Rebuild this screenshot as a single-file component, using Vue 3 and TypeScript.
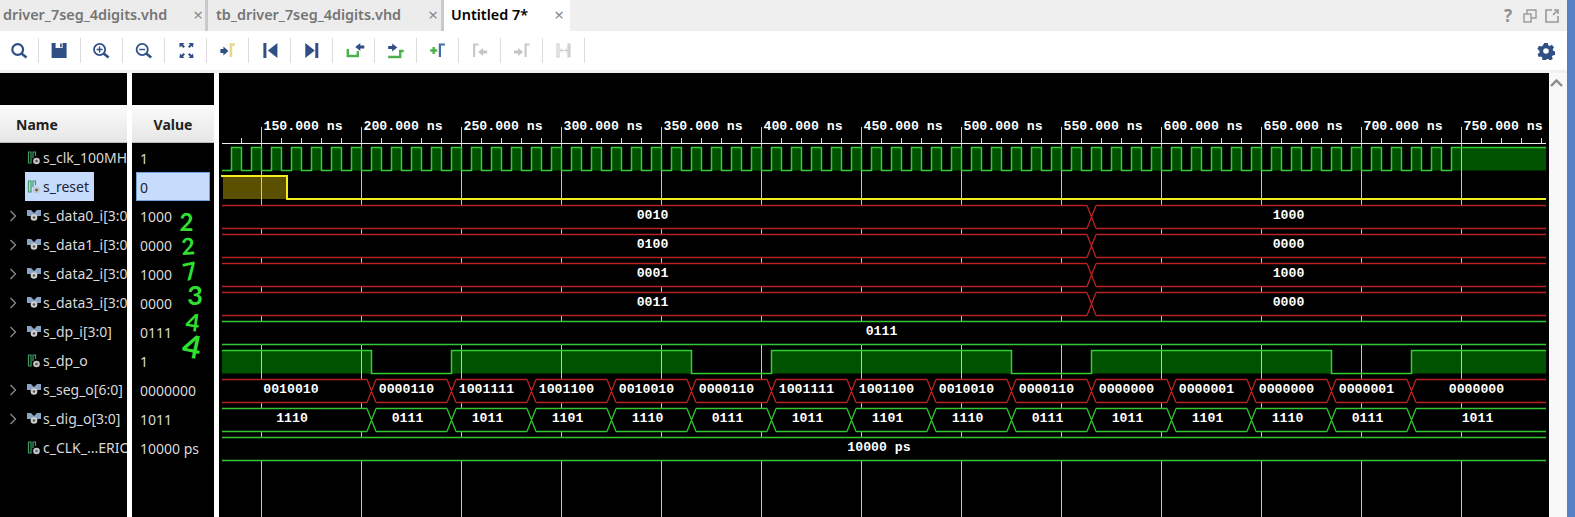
<template>
  <div class="page">
    <div class="main">
      <div class="tabbar">
        <div class="tab tab-a"><span>driver_7seg_4digits.vhd</span><i class="close">×</i></div>
        <div class="tab tab-b"><span>tb_driver_7seg_4digits.vhd</span><i class="close">×</i></div>
        <div class="tab tab-c"><span>Untitled 7*</span><i class="close">×</i></div>
        <div class="win-icons">
          <b class="help">?</b>
          <svg width="14" height="14" viewBox="0 0 14 14" fill="none" stroke="#9a9a9a" stroke-width="1.4">
            <rect x="1" y="5" width="7" height="8" />
            <path d="M4 5V1h9v8H8" />
          </svg>
          <svg width="14" height="14" viewBox="0 0 14 14" fill="none" stroke="#9a9a9a" stroke-width="1.6">
            <path d="M7 1H1v12h12V7" />
            <path d="M8 6l5-5M9 1h4v4" />
          </svg>
        </div>
      </div>

      <div class="toolbar">
        <button class="tool first">
          <svg width="24" height="24" viewBox="5 39 24 24" fill="none" stroke="#2f4f85" stroke-width="2.2">
            <circle cx="15.7" cy="49.5" r="5.4" />
            <path d="M19.5 53.5l5 4" stroke-width="2.6" />
          </svg>
        </button>
        <button class="tool">
          <svg width="24" height="24" viewBox="47.4 39 24 24">
            <path d="M52 43h15v15H52z" fill="#2f4f85" />
            <path d="M56 43h7v5h-7z" fill="#fff" />
            <path d="M60.5 43.6h1.6v3.6h-1.6z" fill="#2f4f85" />
          </svg>
        </button>
        <button class="tool">
          <svg width="24" height="24" viewBox="89.4 39 24 24" fill="none" stroke="#2f4f85" stroke-width="1.8">
            <circle cx="100" cy="49.5" r="5.6" />
            <path d="M97 49.5h6M100 46.5v6" stroke-width="1.4" />
            <path d="M104 53.5l5 4" stroke-width="2.6" />
          </svg>
        </button>
        <button class="tool">
          <svg width="24" height="24" viewBox="131.5 39 24 24" fill="none" stroke="#2f4f85" stroke-width="1.8">
            <circle cx="142.7" cy="49.5" r="5.6" />
            <path d="M139.7 49.5h6" stroke-width="1.4" />
            <path d="M146.7 53.5l5 4" stroke-width="2.6" />
          </svg>
        </button>
        <button class="tool">
          <svg width="24" height="24" viewBox="173.5 39 24 24" fill="#2f4f85">
            <path d="M180 43h5l-1.5 1.5 2 2-1.5 1.5-2-2L180 47.5z" />
            <path d="M194 43h-5l1.5 1.5-2 2 1.5 1.5 2-2 1.5 1.5z" />
            <path d="M180 58h5l-1.5-1.5 2-2-1.5-1.5-2 2-1.5-1.5z" />
            <path d="M194 58h-5l1.5-1.5-2-2 1.5-1.5 2 2 1.5-1.5z" />
          </svg>
        </button>
        <button class="tool">
          <svg width="24" height="24" viewBox="215.6 39 24 24">
            <path d="M220 49h3v-2.5l5 4.5-5 4.5V53h-3z" fill="#2f4f85" />
            <path d="M230.5 57V44.5h4" fill="none" stroke="#e6d88e" stroke-width="2.6" />
          </svg>
        </button>
        <button class="tool">
          <svg width="24" height="24" viewBox="257.6 39 24 24" fill="#2f4f85">
            <path d="M263 43h3v15h-3zM277 43v15l-9.5-7.5z" />
          </svg>
        </button>
        <button class="tool">
          <svg width="24" height="24" viewBox="299.7 39 24 24" fill="#2f4f85">
            <path d="M315 43h3v15h-3zM305 43v15l9.5-7.5z" />
          </svg>
        </button>
        <button class="tool">
          <svg width="24" height="24" viewBox="341.7 39 24 24">
            <path d="M347.5 49v7h10v-5" fill="none" stroke="#4cb04c" stroke-width="2.4" />
            <path d="M364 45.5h-4v-2.5l-5 4 5 4v-2.5h4z" fill="#2f4f85" />
          </svg>
        </button>
        <button class="tool">
          <svg width="24" height="24" viewBox="383.8 39 24 24">
            <path d="M388 57h12v-6h3.5" fill="none" stroke="#4cb04c" stroke-width="2.4" />
            <path d="M388 46h4v-2.5l5 4-5 4V49h-4z" fill="#2f4f85" />
          </svg>
        </button>
        <button class="tool">
          <svg width="24" height="24" viewBox="425.8 39 24 24" fill="none">
            <path d="M430 50.5h7M433.5 47v7" stroke="#4cb04c" stroke-width="2.4" />
            <path d="M439.7 57V44.5h5" stroke="#3f6f9f" stroke-width="2.2" />
          </svg>
        </button>
        <button class="tool">
          <svg width="24" height="24" viewBox="467.9 39 24 24" fill="none">
            <path d="M474 57V44.5h4.5" stroke="#c9c9c9" stroke-width="2.2" />
            <path d="M487 50.5h-4v-2.5l-5 4 5 4v-2.5h4z" fill="#c4c4c4" />
          </svg>
        </button>
        <button class="tool">
          <svg width="24" height="24" viewBox="509.9 39 24 24" fill="none">
            <path d="M514 50.5h4v-2.5l5 4-5 4v-2.5h-4z" fill="#c4c4c4" />
            <path d="M525.5 57V44.5h4" stroke="#c9c9c9" stroke-width="2.2" />
          </svg>
        </button>
        <button class="tool">
          <svg width="24" height="24" viewBox="552 39 24 24" fill="none" stroke="#cdcdcd">
            <path d="M557 44h2v13h-2z" stroke-width="1.2" />
            <path d="M568 44h2v13h-2z" fill="#d8d8d8" stroke-width="1.2" />
            <path d="M560 50.5h7.5M562 48.5l-2 2 2 2M565.5 48.5l2 2-2 2" />
          </svg>
        </button>
        <svg class="gear" width="18" height="18" viewBox="0 0 18 18">
          <path
            fill="#2f4f85"
            fill-rule="evenodd"
            d="M7.2 1h3.6l.5 2.3 1.5.7 2-1.2 2.3 2.6-1.4 1.9.4 1.5 2.1.9-.2 3.3-2.3.4-.8 1.4.9 2.1-2.9 1.7-1.6-1.7-1.6.1-1.2 1.9-3.2-1-.1-2.3-1.2-1-2.3.4-1.1-3.1 1.9-1.2v-1.6L.4 6.7l1.7-3 2.2.8L5.7 3.7z M9 6.2a2.8 2.8 0 1 0 0 5.6 2.8 2.8 0 0 0 0-5.6z"
          />
        </svg>
      </div>

      <div class="body">
        <div class="col names">
          <div class="head">Name</div>
          <div v-for="s in signals" :key="s.name" class="row">
            <svg v-if="s.bus" class="chev" width="8" height="12" viewBox="0 0 8 12" fill="none" stroke="#8a8a8a" stroke-width="1.3">
              <path d="M1.5 1l5 5-5 5" />
            </svg>
            <div class="name-box" :class="{ sel: s.sel }">
              <svg class="sig" width="14" height="14" viewBox="0 0 14 14">
                <template v-if="s.bus">
                  <path d="M0 1h4l3 3 3-3h4v6h-3.5L7 10 3.5 7H0z" fill="#8aa3c2" />
                  <circle cx="7" cy="8.5" r="3.3" fill="#cfcfcf" />
                  <circle cx="7" cy="8.5" r="1.3" fill="#555" />
                </template>
                <template v-else>
                  <path d="M1.5 1v11h2.5V1zM6 7V1h2.5v4" fill="none" stroke="#3f9a63" stroke-width="1.2" />
                  <circle cx="9.5" cy="10" r="3.3" fill="#c4c4c4" />
                  <circle cx="9.5" cy="10" r="1.3" :fill="s.konst ? '#4a6fb0' : '#555'" />
                </template>
              </svg>
              <span>{{ s.name }}</span>
            </div>
          </div>
        </div>

        <div class="col values">
          <div class="head center">Value</div>
          <div v-for="s in signals" :key="s.name" class="row val" :class="{ sel: s.sel }">{{ s.value }}</div>
        </div>

        <svg class="wave" width="1330" height="444" viewBox="219 73 1330 444">
          <rect x="219" y="73" width="1330" height="444" fill="#000" />

          <path :d="clkFill" fill="#005200" />
          <path d="M223 177h64v22h-64z" fill="#5b5000" />
          <path :d="dpFill" fill="#005200" />

          <line v-for="g in grid" :key="g" :x1="g" :x2="g" y1="127" y2="517" stroke="#c6c6c6" />
          <text v-for="(l, i) in labels" :key="l" class="mono" :x="263.5 + i * 100" y="129.5">{{ l }}</text>
          <line x1="222" x2="1546" y1="143.5" y2="143.5" stroke="#eee" />
          <line v-for="t in ticks" :key="t" :x1="t" :x2="t" y1="138" y2="143" stroke="#ddd" />

          <path :d="clkLine" fill="none" stroke="#32cf32" stroke-width="1.5" />
          <path d="M221 176h66v23h1259" fill="none" stroke="#f2ee1e" stroke-width="2" />
          <path :d="dpLine" fill="none" stroke="#32cf32" stroke-width="1.5" />

          <g v-for="b in buses" :key="b.top">
            <path :d="b.fill" fill="#000" />
            <path :d="b.line" fill="none" :stroke="b.color" stroke-width="1.3" />
            <text v-for="t in b.texts" :key="t.x" class="mono mid" :x="t.x" :y="b.top + 13.5">{{ t.s }}</text>
          </g>
        </svg>

        <div class="scroll">
          <svg width="13" height="8" viewBox="0 0 13 8" fill="none" stroke="#8a8a8a" stroke-width="2.4">
            <path d="M1 7l5.5-5.5L12 7" />
          </svg>
        </div>

        <span
          v-for="n in notes"
          :key="n.y"
          class="note"
          :style="{
            left: n.x + 'px',
            top: n.y + 'px',
            fontSize: n.size + 'px',
            transform: `translate(-50%, -50%) rotate(${n.rot}deg)`,
          }"
          >{{ n.ch }}</span
        >
      </div>
    </div>
    <div class="stripe"></div>
  </div>
</template>

<script setup lang="ts">
interface Signal {
  name: string
  value: string
  bus?: boolean
  sel?: boolean
  konst?: boolean
}

const signals: Signal[] = [
  { name: 's_clk_100MHz', value: '1' },
  { name: 's_reset', value: '0', sel: true },
  { name: 's_data0_i[3:0]', value: '1000', bus: true },
  { name: 's_data1_i[3:0]', value: '0000', bus: true },
  { name: 's_data2_i[3:0]', value: '1000', bus: true },
  { name: 's_data3_i[3:0]', value: '0000', bus: true },
  { name: 's_dp_i[3:0]', value: '0111', bus: true },
  { name: 's_dp_o', value: '1' },
  { name: 's_seg_o[6:0]', value: '0000000', bus: true },
  { name: 's_dig_o[3:0]', value: '1011', bus: true },
  { name: 'c_CLK_...ERIOD', value: '10000 ps', konst: true },
]

// handwritten counts scribbled next to the values
const notes = [
  { ch: '2', x: 186.5, y: 148.5, size: 24, rot: 0 },
  { ch: '2', x: 187.5, y: 172.5, size: 23, rot: -4 },
  { ch: '7', x: 190, y: 197.5, size: 24, rot: -12 },
  { ch: '3', x: 195, y: 221, size: 27, rot: 0 },
  { ch: '4', x: 192.5, y: 248.5, size: 24, rot: 8 },
  { ch: '4', x: 192, y: 272.5, size: 32, rot: 12 },
]

const RED = '#b82222'
const GREEN = '#34c534'
const WAVE_START = 222
const WAVE_END = 1546

const grid = Array.from({ length: 13 }, (_, i) => 261.5 + i * 100)
const labels = grid.map((_, i) => `${150 + i * 50}.000 ns`)
const ticks = Array.from({ length: 66 }, (_, i) => 241.5 + i * 20).filter((t) => (t - 261.5) % 100 !== 0)

const rowTop = (i: number) => 147.5 + 29 * i

// clock: rises every 20px, last rise stays high
let clkFill = ''
let clkLine = `M222 ${rowTop(0) + 23}`
for (let x = 231.5; x < 1440; x += 20) {
  clkFill += `M${x} 147.5h10v23h-10z`
  clkLine += `H${x}V147.5h10V170.5`
}
clkFill += `M1451.5 147.5H${WAVE_END}v23H1451.5z`
clkLine += `H1451.5V147.5H${WAVE_END}`

let dpFill = 'M222 351h149.5v22.5H222z'
let dpLine = 'M222 350.5H371.5V373.5'
for (const [a, b] of [
  [451.5, 691.5],
  [771.5, 1011.5],
  [1091.5, 1331.5],
]) {
  dpFill += `M${a} 351H${b}v22.5H${a}z`
  dpLine += `H${a}V350.5H${b}V373.5`
}
dpFill += `M1411.5 351H${WAVE_END}v22.5H1411.5z`
dpLine += `H1411.5V350.5H${WAVE_END}`

// outline of a bus row: one hexagon per value, an X at every transition
function busShape(top: number, changes: number[]) {
  const bot = top + 23
  const mid = top + 11.5
  const w = 4.5
  const edges = [WAVE_START, ...changes, WAVE_END]
  let line = ''
  let fill = ''
  for (let i = 0; i < edges.length - 1; i++) {
    const a = edges[i]
    const b = edges[i + 1]
    const left = a === WAVE_START ? a : a + w
    const right = b === WAVE_END ? b : b - w
    line += `M${left} ${top}H${right}M${left} ${bot}H${right}`
    fill += `M${left} ${top}H${right}L${b} ${mid}L${right} ${bot}H${left}L${a} ${mid}z`
  }
  for (const c of changes) {
    line += `M${c - w} ${top}L${c + w} ${bot}M${c - w} ${bot}L${c + w} ${top}`
  }
  return { line, fill }
}

function busRow(i: number, color: string, changes: number[], texts: { x: number; s: string }[]) {
  const top = rowTop(i)
  return { top, color, texts, ...busShape(top, changes) }
}

const steps = Array.from({ length: 14 }, (_, i) => 371.5 + i * 80)
const segVals = ['0010010', '0000110', '1001111', '1001100', '0010010', '0000110', '1001111', '1001100', '0010010', '0000110', '0000000', '0000001', '0000000', '0000001', '0000000']
const digVals = ['1110', '0111', '1011', '1101', '1110', '0111', '1011', '1101', '1110', '0111', '1011', '1101', '1110', '0111', '1011']
const stepX = (i: number) => (i === 0 ? 291 : i === 14 ? 1476.5 : 406.5 + (i - 1) * 80)

const buses = [
  busRow(2, RED, [1091.5], [{ x: 652.5, s: '0010' }, { x: 1288.5, s: '1000' }]),
  busRow(3, RED, [1091.5], [{ x: 652.5, s: '0100' }, { x: 1288.5, s: '0000' }]),
  busRow(4, RED, [1091.5], [{ x: 652.5, s: '0001' }, { x: 1288.5, s: '1000' }]),
  busRow(5, RED, [1091.5], [{ x: 652.5, s: '0011' }, { x: 1288.5, s: '0000' }]),
  busRow(6, GREEN, [], [{ x: 881.5, s: '0111' }]),
  busRow(8, RED, steps, segVals.map((s, i) => ({ x: stepX(i), s }))),
  busRow(9, GREEN, steps, digVals.map((s, i) => ({ x: stepX(i) + 1, s }))),
  busRow(10, GREEN, [], [{ x: 879, s: '10000 ps' }]),
]
</script>

<style scoped>
.page {
  display: flex;
  width: 1575px;
  height: 517px;
  overflow: hidden;
  font-family: 'Noto Sans', 'Open Sans', sans-serif;
}
.main {
  width: 1567px;
  display: flex;
  flex-direction: column;
  background: #f0f0f0;
}
.stripe {
  flex: 1;
  background: #5580c6;
}
.tabbar {
  height: 31px;
  display: flex;
  background: #efefef;
  font-size: 14.4px;
  font-weight: 600;
}
.tab {
  position: relative;
  height: 31px;
  line-height: 29px;
  color: #757575;
  background: #ececec;
  white-space: nowrap;
  box-sizing: border-box;
}
.tab-a {
  width: 208px;
  padding-left: 3px;
  border-right: 3px solid #c9c9c9;
}
.tab-b {
  width: 236px;
  padding-left: 8px;
  border-right: 3px solid #c9c9c9;
}
.tab-c {
  width: 126px;
  padding-left: 7px;
  background: #fff;
  color: #000;
}
.close {
  position: absolute;
  top: 0;
  right: 2px;
  font-style: normal;
  font-weight: 400;
  font-size: 17px;
  color: #8a8a8a;
}
.tab-b .close {
  right: 3px;
}
.tab-c .close {
  right: 6px;
}
.win-icons {
  margin-left: auto;
  display: flex;
  align-items: center;
  gap: 8px;
  padding-right: 8px;
}
.help {
  color: #8f8f8f;
  font-size: 17px;
  font-weight: 700;
  margin-right: 3px;
}
.toolbar {
  position: relative;
  height: 39px;
  display: flex;
  align-items: center;
  background: #fff;
}
.tool {
  width: 42.05px;
  height: 25px;
  padding: 0;
  border: 0;
  border-right: 1px solid #dcdcdc;
  background: none;
  display: flex;
  align-items: center;
  justify-content: center;
  box-sizing: border-box;
}
.tool.first {
  width: 38.8px;
}
.gear {
  margin-left: auto;
  margin-right: 12px;
}
.body {
  position: relative;
  margin-top: 3px;
  height: 444px;
  display: flex;
  background: #fff;
}
.col {
  padding-top: 32px;
  background: #000;
  color: #d9d9d9;
  font-size: 14px;
  box-sizing: border-box;
  overflow: hidden;
}
.names {
  width: 127px;
}
.values {
  width: 82px;
  margin-left: 5px;
  margin-right: 5px;
}
.head {
  height: 38px;
  line-height: 39px;
  padding-left: 16px;
  font-weight: 700;
  font-size: 14px;
  color: #222;
  background: linear-gradient(#fbfbfb, #e6e6e6);
  border-bottom: 1px solid #bbb;
  box-sizing: border-box;
}
.head.center {
  padding-left: 0;
  text-align: center;
}
.row {
  position: relative;
  height: 29px;
  line-height: 31px;
  white-space: nowrap;
}
.chev {
  position: absolute;
  left: 9px;
  top: 9px;
}
.name-box {
  position: absolute;
  left: 25px;
  top: 0;
  height: 29px;
  padding-left: 2px;
  padding-right: 5px;
  display: flex;
  align-items: center;
  gap: 2px;
}
.name-box.sel {
  background: #c6dcfd;
  color: #223;
}
.val {
  padding-left: 8px;
}
.val.sel {
  margin: 0 4px;
  padding-left: 3px;
  box-sizing: border-box;
  line-height: 29px;
  color: #223;
  background: #c6dcfd;
  border: 1px solid #6ea2d8;
}
.sig {
  flex: none;
}
.wave {
  display: block;
  flex: none;
}
.mono {
  font-family: 'Liberation Mono', monospace;
  font-weight: 700;
  font-size: 13.2px;
  fill: #fff;
}
.mid {
  text-anchor: middle;
}
.scroll {
  flex: 1;
  display: flex;
  justify-content: center;
  padding-top: 6px;
  background: #f8f8f8;
}
.scroll svg {
  margin-left: -4px;
}
.note {
  position: absolute;
  font-family: Lato, 'Noto Sans', sans-serif;
  font-weight: 700;
  line-height: 1;
  color: #2fe02f;
}
</style>

<style>
body {
  background: #fff;
}
</style>
